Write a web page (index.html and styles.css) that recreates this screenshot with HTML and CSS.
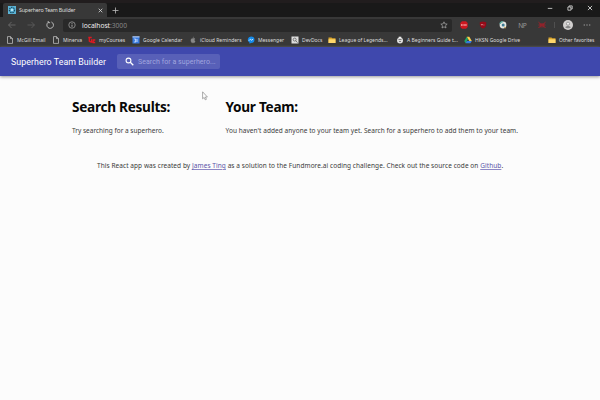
FILE: index.html
```html
<!DOCTYPE html>
<html lang="en">
<head>
<meta charset="utf-8">
<title>Superhero Team Builder</title>
<link rel="stylesheet" href="styles.css">
</head>
<body>
<div class="browser">
  <div class="tabstrip">
    <div class="tab">
      <svg class="favicon" viewBox="0 0 8 8"><rect width="8" height="8" fill="#5cb4d6"/><circle cx="4" cy="4" r="2.6" fill="none" stroke="#174a63" stroke-width="1.2" stroke-dasharray="1.4 .8"/><circle cx="4" cy="4" r="1" fill="#d3f3fb"/></svg>
      <span class="tab-title">Superhero Team Builder</span>
      <svg class="tab-close" viewBox="0 0 5 5"><path d="M.7.7l3.6 3.6M4.3.7L.7 4.3" stroke="#ddd" stroke-width=".8"/></svg>
    </div>
    <svg class="newtab" viewBox="0 0 7 7"><path d="M3.5.5v6M.5 3.5h6" stroke="#bbb" stroke-width=".8"/></svg>
    <div class="window-controls">
      <svg viewBox="0 0 6 6"><path d="M.8 3.4h4.5" stroke="#ddd" stroke-width=".8"/></svg>
      <svg viewBox="0 0 6 6"><path d="M.9 2h3v3.2h-3zM2 2V.9h3.2V4H4" fill="none" stroke="#ddd" stroke-width=".8"/></svg>
      <svg viewBox="0 0 6 6"><path d="M.9.9l4.2 4.2M5.1.9L.9 5.1" stroke="#eee" stroke-width=".8"/></svg>
    </div>
  </div>
  <div class="toolbar">
    <div class="nav">
      <svg viewBox="0 0 8 8"><path d="M7.5 4h-7M3.6.9L.6 4l3 3.1" fill="none" stroke="#707070" stroke-width=".8"/></svg>
      <svg viewBox="0 0 8 8"><path d="M.5 4h7M4.4.9l3 3.1-3 3.1" fill="none" stroke="#606060" stroke-width=".8"/></svg>
      <svg viewBox="0 0 8 8"><path d="M2.2 1.4A3.3 3.3 0 1 0 5.4 1M2.2 0v1.7h1.9" fill="none" stroke="#c6c6c6" stroke-width=".9"/></svg>
    </div>
    <div class="address">
      <svg class="info" viewBox="0 0 8 8"><circle cx="4" cy="4" r="3.2" fill="none" stroke="#aaa" stroke-width=".7"/><path d="M4 3.6v2.2M4 2.1v.8" stroke="#ccc" stroke-width=".8"/></svg>
      <span class="url">localhost<span class="port">:3000</span></span>
      <svg class="star" viewBox="0 0 8 8"><path d="M4 .8l.9 2.1 2.3.2-1.7 1.6.5 2.3-2-1.2L2 7l.5-2.3L.8 3.1l2.3-.2z" fill="none" stroke="#aaa" stroke-width=".7"/></svg>
    </div>
    <div class="extensions">
      <svg viewBox="0 0 10 10"><path d="M3 1.2h4L8.7 3v4L7 8.8H3L1.3 7V3z" fill="#ce1720"/><path d="M2 5h6" stroke="#f4a9a9" stroke-width="1.4" stroke-dasharray="1 .4"/></svg>
      <svg viewBox="0 0 10 10"><path d="M5 1.500l3.200.8v2.400c0 2-1.400 3-3.200 3.800-1.800-.8-3.200-1.800-3.200-3.800V2.300z" fill="#950a18"/><path d="M3.400 4v1h1V4m1 1h1" fill="none" stroke="#dd9a9c" stroke-width=".7"/></svg>
      <svg viewBox="0 0 10 10"><circle cx="5" cy="5" r="3.400" fill="#e2e6e2"/><path d="M2 4a3 3 0 0 1 3-2.400" stroke="#57a99c" stroke-width="1.200" fill="none"/><circle cx="5.200" cy="5" r="1.500" fill="#3e7c94"/><path d="M6 7l2 1" stroke="#c6a252"/></svg>
      <span class="np">NP</span>
      <svg viewBox="0 0 10 10"><path d="M1.500 2.200l2 1.800M1.500 8l2-2M8.500 2.200L6.500 4M8.500 8l-2-2M1.500 5h7M4 3v4.500M6 3v4.500" fill="none" stroke="#b31c27" stroke-width=".9"/></svg>
    </div>
    <span class="divider"></span>
    <svg class="avatar" viewBox="0 0 10 10"><circle cx="5" cy="5" r="5" fill="#d2d0cf"/><circle cx="5" cy="3.700" r="1.600" fill="#eee" stroke="#7c7c7c" stroke-width=".7"/><path d="M2.300 7.500c0-2 5.400-2 5.400 0-.8 1-4.600 1-5.400 0z" fill="#858585"/></svg>
    <svg class="more" viewBox="0 0 8 8"><path d="M.7 4h1.200M3.400 4h1.200M6.100 4h1.200" stroke="#aaa"/></svg>
  </div>
  <div class="bookmarks">
    <div class="bookmark"><svg viewBox="0 0 8 8"><path d="M1.500.6h3l2 2v4.800h-5zM4.500.6v2h2" fill="none" stroke="#ccc" stroke-width=".7"/></svg><span>McGill Email</span></div>
    <div class="bookmark"><svg viewBox="0 0 8 8"><path d="M1.500.6h3l2 2v4.800h-5zM4.500.6v2h2" fill="none" stroke="#ccc" stroke-width=".7"/></svg><span>Minerva</span></div>
    <div class="bookmark"><svg viewBox="0 0 8 8"><path d="M.3 1.500h3.400M1.300 1v4.200l1.500.9M3.500 3.200v3h1.800M7.300 4H5.200v2.500h2" fill="none" stroke="#e01820" stroke-width="1.300"/></svg><span>myCourses</span></div>
    <div class="bookmark"><svg viewBox="0 0 8 8"><rect x=".5" y=".5" width="7" height="7" fill="#397be0"/><path d="M.5.9h7" stroke="#ccdcf8"/><path d="M2.200 3h1.500v3H2.200M5 3v3" fill="none" stroke="#e6efff" stroke-width=".8"/></svg><span>Google Calendar</span></div>
    <div class="bookmark"><svg viewBox="0 0 8 8"><path d="M4 2.600c1-.6 2 0 2 .5-1 .8-.8 1.700.2 2.200-.5 1.400-1.200 1.800-2.100 1.400-1 .4-1.700-.1-2.100-1.400-.5-1.900.4-3.100 2-2.700zM4 2c0-.8.4-1.200 1-1.300" fill="#888" stroke="#888" stroke-width=".3"/></svg><span>iCloud Reminders</span></div>
    <div class="bookmark"><svg viewBox="0 0 8 8"><path d="M4 .5a3.400 3.200 0 0 1 0 6.500L2.500 7.800V6.500A3.400 3.200 0 0 1 4 .5z" fill="#168bea"/><path d="M1.900 4.700l1.500-1.500 1.100 1 1.600-1" fill="none" stroke="#fff" stroke-width=".8"/></svg><span>Messenger</span></div>
    <div class="bookmark"><svg viewBox="0 0 8 8"><rect x=".5" y=".5" width="7" height="7" fill="#ddd"/><circle cx="3.700" cy="3.600" r="1.500" fill="none" stroke="#555" stroke-width=".7"/><path d="M4.700 4.800L6.500 6.500" stroke="#555" stroke-width=".8"/></svg><span>DevDocs</span></div>
    <div class="bookmark"><svg viewBox="0 0 8 8"><path d="M.5 1.500h3l.8.8h3.200v4.700h-7z" fill="#d9a52d"/><path d="M.5 3.300h7V7h-7z" fill="#ffd76b"/></svg><span>League of Legends...</span></div>
    <div class="bookmark"><svg viewBox="0 0 8 8"><ellipse cx="4" cy="4.500" rx="3" ry="3" fill="#ddd"/><path d="M2.700 2h2.600V.7H2.700z" fill="#eee"/><path d="M2.500 3.500h3M3 5.500h2" stroke="#555" stroke-width=".7"/></svg><span>A Beginners Guide t...</span></div>
    <div class="bookmark"><svg viewBox="0 0 8 8"><path d="M2.800.8L.3 5.100l1.300 2.100 2.500-4.200z" fill="#20a66b"/><path d="M2.800.8h2.500l2.500 4.300H5.300z" fill="#ffcf48"/><path d="M2.800 5.100h5L6.500 7.200H1.600z" fill="#347cdd"/></svg><span>HKSN Google Drive</span></div>
    <div class="bookmark"><svg viewBox="0 0 8 8"><path d="M.5 1.500h3l.8.8h3.200v4.700h-7z" fill="#d9a52d"/><path d="M.5 3.300h7V7h-7z" fill="#ffd76b"/></svg><span>Other favorites</span></div>
  </div>
</div>
<header class="appbar">
  <span class="brand">Superhero Team Builder</span>
  <div class="search">
    <svg viewBox="0 0 9 9"><circle cx="3.500" cy="3.500" r="2.400" fill="none" stroke="#fff" stroke-width="1.100"/><path d="M5.300 5.300l3 3" stroke="#fff" stroke-width="1.300"/></svg>
    <span>Search for a superhero...</span>
  </div>
</header>
<main>
  <div class="columns">
    <section><h1>Search Results:</h1><p>Try searching for a superhero.</p></section>
    <section><h1>Your Team:</h1><p class="empty">You haven't added anyone to your team yet. Search for a superhero to add them to your team.</p></section>
  </div>
  <footer>This React app was created by <a href="#">James Ting</a> as a solution to the Fundmore.ai coding challenge. Check out the source code on <a href="#">Github</a>.</footer>
</main>
<svg class="cursor" viewBox="0 0 6 10"><path d="M.6.8v7l1.600-1.400 1 2.400 1.200-.5-1-2.300h2z" fill="#fff" stroke="#888" stroke-width=".7"/></svg>
</body>
</html>
```
FILE: styles.css
```css
* { box-sizing: border-box; }
body {
  margin: 0;
  height: 400px;
  overflow: hidden;
  background: #fcfcfc;
  color: #3a3a3a;
  font-family: "Noto Sans", "Open Sans", sans-serif;
}
svg { display: block; flex: none; }
span, h1, p, footer { white-space: nowrap; }

.browser { height: 47px; background: #383838; }
.tabstrip {
  height: 17px;
  padding: 0 6px 0 3px;
  display: flex;
  align-items: center;
  background: #191919;
  border-top: 3px solid #211d1e;
}
.tab {
  width: 104px;
  height: 14px;
  padding: 0 4px 0 5px;
  display: flex;
  align-items: center;
  background: #383838;
  border-radius: 2px 2px 0 0;
}
.favicon { width: 8px; height: 8px; }
.tab-title { margin-left: 3px; color: #ddd; font-size: 5.3px; letter-spacing: -.18px; }
.tab-close { width: 5px; height: 5px; margin-left: auto; }
.newtab { width: 7px; height: 7px; margin-left: 5px; }
.window-controls { display: flex; gap: 14px; margin: -4px 0 0 auto; padding-right: 1px; }
.window-controls svg { width: 6px; height: 6px; }

.toolbar { height: 16px; display: flex; align-items: center; padding: 0 8px; }
.nav { display: flex; gap: 11px; width: 55px; }
.nav svg { width: 8px; height: 8px; }
.address {
  width: 389px;
  height: 13px;
  padding: 0 4px 0 5px;
  display: flex;
  align-items: center;
  background: #292929;
  border-radius: 2px;
}
.info, .star { width: 8px; height: 8px; }
.url { margin-left: 6px; color: #eee; font-size: 6.7px; letter-spacing: -.03px; }
.port { color: #888; }
.star { margin-left: auto; }
.extensions { display: flex; align-items: center; gap: 9.4px; margin-left: 7px; }
.extensions svg { width: 10px; height: 10px; }
.np { width: 10px; text-align: center; color: #999; font: 6.6px "Noto Sans", sans-serif; letter-spacing: -.5px; }
.divider { width: 1px; height: 6px; margin-left: 7px; background: #505050; }
.avatar { width: 10px; height: 10px; margin-left: 8px; }
.more { width: 8px; height: 8px; margin-left: 10px; }

.bookmarks {
  height: 14px;
  padding-left: 6px;
  display: grid;
  grid-template-columns: 46px 36px 44px 57px 58px 44px 37px 68px 68px 84px 52px;
  align-items: center;
}
.bookmark { display: flex; align-items: center; gap: 3px; color: #ddd; font-size: 5px; }
.bookmark svg { width: 8px; height: 8px; }

.appbar {
  height: 29px;
  padding-left: 11px;
  display: flex;
  align-items: center;
  background: #3f48ad;
  box-shadow: 0 1px 3px #999;
  color: #fff;
  font-family: Roboto, sans-serif;
}
.brand { width: 106px; font-size: 8.8px; letter-spacing: .07px; }
.search {
  width: 103px;
  height: 15px;
  padding-left: 8px;
  display: flex;
  align-items: center;
  gap: 4px;
  background: #5860b8;
  border-radius: 2px;
  color: #a1a6df;
  font-size: 7px;
  letter-spacing: .06px;
}
.search svg { width: 9px; height: 9px; }

main { padding-top: 19px; }
.columns { display: grid; grid-template-columns: 153.5px 300px; padding-left: 72px; }
h1 { margin: 0; color: #080808; font-size: 13.6px; line-height: 24px; letter-spacing: -.27px; }
p { margin: 6px 0 0; font-size: 6.5px; line-height: 12px; }
.empty { letter-spacing: .052px; }
footer { margin: 23px 0 0 97px; font-size: 6.5px; line-height: 12px; letter-spacing: .063px; }
a { color: #5a54a8; text-decoration-color: #8d88c4; }
.cursor { position: absolute; left: 202px; top: 91px; width: 6px; height: 10px; }
```
